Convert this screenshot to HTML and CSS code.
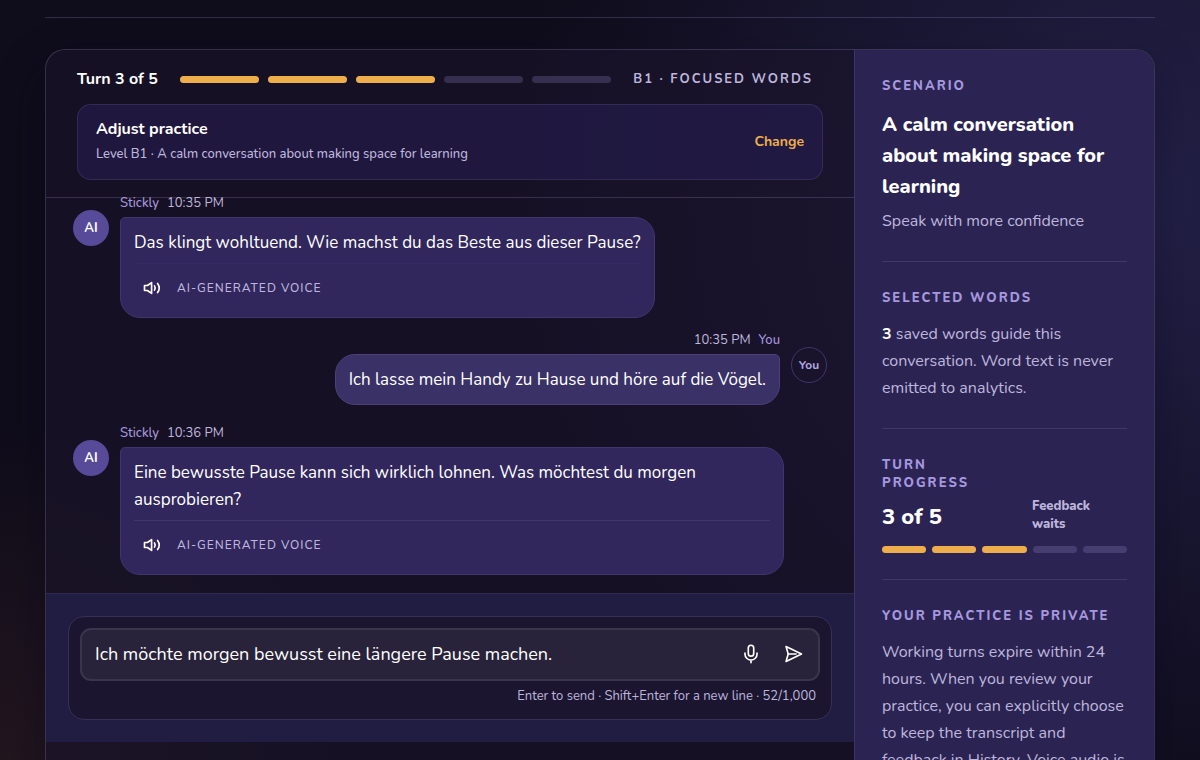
FILE: index.html
```html
<!DOCTYPE html>
<html lang="en">
<head>
<meta charset="utf-8">
<meta name="viewport" content="width=device-width, initial-scale=1">
<title>Stickly practice</title>
<link rel="stylesheet" href="styles.css">
</head>
<body>
<div class="page">
  <hr class="page-rule">
  <main class="workspace">
    <section class="chat" aria-label="Conversation">
      <header class="chat-header">
        <div class="turn-row">
          <strong class="turn-label">Turn 3 of 5</strong>
          <div class="steps steps-wide" aria-hidden="true">
            <span class="step done"></span><span class="step done"></span><span class="step done"></span><span class="step"></span><span class="step"></span>
          </div>
          <span class="level-label">B1 · FOCUSED WORDS</span>
        </div>
        <div class="adjust">
          <div>
            <div class="adjust-title">Adjust practice</div>
            <div class="adjust-detail">Level B1 · A calm conversation about making space for learning</div>
          </div>
          <button class="change" type="button">Change</button>
        </div>
      </header>

      <div class="messages">
        <article class="message">
          <div class="avatar avatar-ai">AI</div>
          <div class="message-body">
            <div class="meta"><span class="author">Stickly</span><time>10:35 PM</time></div>
            <div class="bubble">
              <p class="bubble-text">Das klingt wohltuend. Wie machst du das Beste aus dieser Pause?</p>
              <div class="voice voice-faint">
                <button class="icon-button" type="button" aria-label="Play voice">
                  <svg class="icon" viewBox="0 0 24 24"><path d="M3 9h3.500L11.500 5.500v13L6.500 15H3z"/><path d="M15 9.500q1.700 2.500 0 5"/><path d="M18.700 6.500q4 5.500 0 11"/></svg>
                </button>
                <span class="voice-label">AI-GENERATED VOICE</span>
              </div>
            </div>
          </div>
        </article>

        <article class="message message-user">
          <div class="message-body">
            <div class="meta"><time>10:35 PM</time><span class="author">You</span></div>
            <div class="bubble">
              <p class="bubble-text">Ich lasse mein Handy zu Hause und höre auf die Vögel.</p>
            </div>
          </div>
          <div class="avatar avatar-user">You</div>
        </article>

        <article class="message">
          <div class="avatar avatar-ai">AI</div>
          <div class="message-body">
            <div class="meta"><span class="author">Stickly</span><time>10:36 PM</time></div>
            <div class="bubble">
              <p class="bubble-text">Eine bewusste Pause kann sich wirklich lohnen. Was möchtest du morgen ausprobieren?</p>
              <div class="voice">
                <button class="icon-button" type="button" aria-label="Play voice">
                  <svg class="icon" viewBox="0 0 24 24"><path d="M3 9h3.500L11.500 5.500v13L6.500 15H3z"/><path d="M15 9.500q1.700 2.500 0 5"/><path d="M18.700 6.500q4 5.500 0 11"/></svg>
                </button>
                <span class="voice-label">AI-GENERATED VOICE</span>
              </div>
            </div>
          </div>
        </article>
      </div>

      <form class="composer">
        <div class="composer-panel">
          <div class="field">
            <input class="reply" type="text" aria-label="Your reply" value="Ich möchte morgen bewusst eine längere Pause machen.">
            <button class="icon-button" type="button" aria-label="Record voice">
              <svg class="icon" viewBox="0 0 24 24"><rect x="8.750" y="1.500" width="6.500" height="13" rx="3.250"/><path d="M4.750 11v1a7.250 7.250 0 0 0 14.500 0v-1M12 19.250V22.500"/></svg>
            </button>
            <button class="icon-button" type="submit" aria-label="Send">
              <svg class="icon" viewBox="0 0 24 24"><path d="M2.500 3L21 12 2.500 21l2.500-9z"/><path d="M5 12h9.500"/></svg>
            </button>
          </div>
          <div class="hint">Enter to send · Shift+Enter for a new line · 52/1,000</div>
        </div>
      </form>
    </section>

    <aside class="sidebar">
      <section class="side-section">
        <h2 class="eyebrow">SCENARIO</h2>
        <p class="scenario">A calm conversation about making space for learning</p>
        <p class="goal">Speak with more confidence</p>
      </section>
      <section class="side-section">
        <h2 class="eyebrow">SELECTED WORDS</h2>
        <p class="side-text"><strong>3</strong> saved words guide this conversation. Word text is never emitted to analytics.</p>
      </section>
      <section class="side-section side-progress">
        <div class="progress-row">
          <div>
            <h2 class="eyebrow">TURN PROGRESS</h2>
            <p class="progress-value">3 of 5</p>
          </div>
          <p class="waits">Feedback waits</p>
        </div>
        <div class="steps" aria-hidden="true">
          <span class="step done"></span><span class="step done"></span><span class="step done"></span><span class="step"></span><span class="step"></span>
        </div>
      </section>
      <section class="side-section">
        <h2 class="eyebrow">YOUR PRACTICE IS PRIVATE</h2>
        <p class="side-text">Working turns expire within 24 hours. When you review your practice, you can explicitly choose to keep the transcript and feedback in History. Voice audio is</p>
      </section>
    </aside>
  </main>
</div>
</body>
</html>
```
FILE: styles.css
```css
:root {
  --line: rgba(190, 175, 235, 0.2);
  --accent: #eeae4b;
  --muted: #beb6dc;
  --lilac: #a698df;
}

* { box-sizing: border-box; }

body {
  margin: 0;
  color: #fff;
  font-family: Nunito, Lato, sans-serif;
  font-size: 16px;
  background: #100d1d;
}

h2, p { margin: 0; }

button, input { font: inherit; color: inherit; }

button {
  padding: 0;
  border: 0;
  background: none;
  cursor: pointer;
}

.page {
  height: 100vh;
  overflow-y: auto;
  scrollbar-width: none;
  padding: 17px 45px 0;
  background:
    radial-gradient(circle at 96% 26%, #232048 0, rgba(35, 32, 72, 0) 640px),
    radial-gradient(circle at 0 100%, #22161f 0, rgba(34, 22, 31, 0) 340px),
    #0f0c1b;
}

.page-rule {
  margin: 0 0 31px;
  border: 0;
  border-top: 1px solid var(--line);
}

.workspace {
  display: grid;
  grid-template-columns: minmax(0, 1fr) 300px;
  overflow: hidden;
  border: 1px solid var(--line);
  border-radius: 20px;
  background: rgba(26, 20, 44, 0.6);
  box-shadow: 0 20px 50px rgba(8, 5, 20, 0.3);
}

.chat-header {
  padding: 17px 31px;
  border-bottom: 1px solid var(--line);
}

.turn-row {
  display: flex;
  align-items: center;
  gap: 22px;
  height: 24px;
  margin: 0 10px 13px 0;
}

.turn-label { font-size: 16px; }

.steps {
  display: flex;
  gap: 6px;
}

.steps-wide {
  flex: 1;
  gap: 9px;
}

.step {
  flex: 1;
  height: 7px;
  border-radius: 4px;
  background: rgba(140, 125, 190, 0.28);
}

.step.done { background: var(--accent); }

.level-label {
  color: var(--muted);
  font-size: 13px;
  font-weight: 700;
  letter-spacing: 2px;
}

.adjust {
  display: flex;
  align-items: center;
  justify-content: space-between;
  min-height: 76px;
  padding: 0 18px 2px;
  border: 1px solid rgba(190, 175, 235, 0.13);
  border-radius: 14px;
  background: rgba(40, 30, 88, 0.5);
}

.adjust-title {
  font-size: 16px;
  font-weight: 700;
  line-height: 26px;
}

.adjust-detail {
  color: var(--muted);
  font-size: 13px;
  font-weight: 500;
  line-height: 24px;
}

.change {
  color: var(--accent);
  font-size: 14px;
  font-weight: 700;
}

.messages {
  display: flex;
  flex-direction: column;
  justify-content: flex-end;
  height: calc(100vh - 365px);
  padding: 0 27px 18px;
}

.message {
  display: flex;
  flex: none;
  gap: 11px;
  margin-bottom: 12px;
}

.message:last-child { margin-bottom: 0; }

.message-user {
  justify-content: flex-end;
  margin-bottom: 18px;
}

.message-body { max-width: 88%; }

.avatar {
  display: grid;
  flex: none;
  place-items: center;
  width: 36px;
  height: 36px;
  margin-top: 17px;
  border-radius: 50%;
  font-size: 13px;
  font-weight: 700;
}

.avatar-ai { background: #564a99; }

.avatar-user {
  border: 1px solid #40366d;
  color: #b5a9e4;
  font-size: 12px;
}

.meta {
  display: flex;
  gap: 8px;
  height: 24px;
  color: var(--muted);
  font-size: 13px;
  line-height: 20px;
}

.message-user .meta { justify-content: flex-end; }

.author { color: var(--lilac); font-weight: 500; }

.bubble {
  padding: 11px 13px;
  border: 1px solid #40366c;
  border-radius: 5px 20px 20px 20px;
  background: #31275d;
}

.message-user .bubble {
  border-color: #4b4178;
  border-radius: 20px 5px 20px 20px;
  background: #3a3167;
}

.bubble-text {
  font-size: 17px;
  line-height: 27px;
}

.voice {
  display: flex;
  align-items: center;
  gap: 7px;
  margin-top: 7px;
  padding-top: 6px;
  border-top: 1px solid #40366c;
}

.voice-faint { border-color: #352b63; }

.voice-label {
  color: var(--muted);
  font-size: 12px;
  font-weight: 500;
  letter-spacing: 1px;
}

.icon-button {
  display: grid;
  flex: none;
  place-items: center;
  width: 36px;
  height: 36px;
}

.icon {
  width: 20px;
  height: 20px;
  fill: none;
  stroke: #fff;
  stroke-width: 2;
  stroke-linecap: round;
  stroke-linejoin: round;
}

.composer {
  padding: 22px;
  border-top: 1px solid #302a53;
  background: #211c42;
}

.composer-panel {
  padding: 11px;
  border: 1px solid #373052;
  border-radius: 16px;
  background: #1b1530;
}

.field {
  display: flex;
  align-items: center;
  gap: 7px;
  height: 53px;
  padding: 0 6px 2px 13px;
  border: 2px solid #3a354c;
  border-radius: 11px;
  background: #28233a;
}

.reply {
  flex: 1;
  min-width: 0;
  height: 40px;
  padding: 0;
  border: 0;
  outline: 0;
  background: none;
  font-size: 18px;
}

.hint {
  padding: 7px 4px 3px;
  color: var(--muted);
  font-size: 13px;
  line-height: 17px;
  text-align: right;
}

.sidebar {
  padding: 27px 27px 26px;
  border-left: 1px solid #3d3564;
  background: #2b2453;
}

.side-section {
  margin-bottom: 27px;
  padding-bottom: 26px;
  border-bottom: 1px solid #403966;
}

.side-section:last-child { border-bottom: 0; }

.eyebrow {
  color: var(--lilac);
  font-size: 13px;
  font-weight: 800;
  letter-spacing: 2px;
  line-height: 18px;
}

.scenario {
  margin-top: 14px;
  font-size: 20px;
  font-weight: 800;
  line-height: 31px;
}

.goal {
  margin-top: 5px;
  color: var(--muted);
  font-size: 16px;
  line-height: 28px;
}

.side-text {
  margin-top: 14px;
  color: var(--muted);
  font-size: 16px;
  line-height: 27px;
}

.side-text strong { color: #fff; }

.progress-row {
  display: grid;
  grid-template-columns: 1fr 95px;
  gap: 24px;
  align-items: end;
}

.progress-value {
  margin-top: 9px;
  font-size: 22px;
  font-weight: 800;
  line-height: 32px;
}

.waits {
  padding-right: 24px;
  color: var(--muted);
  font-size: 13px;
  font-weight: 800;
  line-height: 18px;
}

.side-progress .steps { margin-top: 13px; }
```
